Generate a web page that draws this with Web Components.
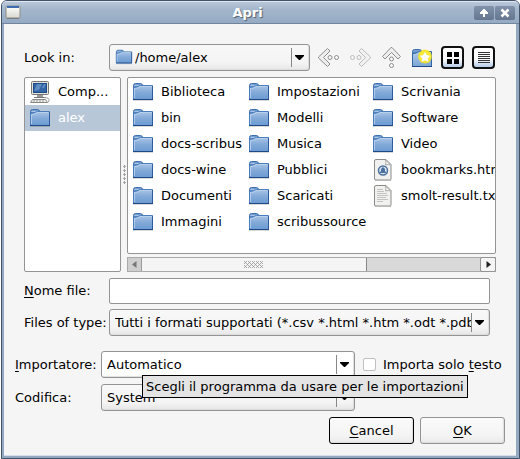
<!DOCTYPE html>
<html lang="it">
<head>
<meta charset="utf-8">
<title>Apri</title>
<style>
html, body { height: 100%; margin: 0; }
body { background: #fff; font: 13px/16px "DejaVu Sans", sans-serif; color: #000; overflow: hidden; }
</style>
</head>
<body>
<file-dialog></file-dialog>
<script>
const ICONS = {
  folder: `<svg width="22" height="20" viewBox="0 0 22 20"><defs><linearGradient id="f" x1="0" y1="0" x2="0" y2="1"><stop offset="0" stop-color="#a9c5e6"/><stop offset=".5" stop-color="#82a9d8"/><stop offset="1" stop-color="#6c9bd1"/></linearGradient></defs><path d="M1 18.5h20" stroke="#000" stroke-opacity=".15"/><path d="M1.500 17V3.500q0-2 2-2h5q1.500 0 2 1.500v2h-9" fill="#729fcf" stroke="#3f6fae"/><path d="M2.500 3.500h7" stroke="#a9c5e6"/><path d="M1.500 5.500q3 0 4.500-1 1-1 2.500-1h12v14h-19z" fill="url(#f)" stroke="#4a7dbb"/><path d="M1 17.500h20" stroke="#204a87"/><path d="M20.500 4v13" stroke="#2f5c9c"/><path d="M2.500 16V6.500q3 0 4.500-1 1-1 2-1h10.500" fill="none" stroke="#bdd3ee" stroke-opacity=".8"/></svg>`,
  computer: `<svg width="22" height="24" viewBox="0 0 22 24"><rect x="2.500" y="1.500" width="17" height="13" rx="1" fill="#e4e4df" stroke="#77776f"/><rect x="4.500" y="3.500" width="13" height="9" fill="#3465a4" stroke="#204a87"/><path d="M5 11l3-7h5l-3 6zM13 8l2-4h2l-2 4z" fill="#729fcf" opacity=".7"/><path d="M8 15h6v3H8z" fill="#999"/><path d="M5 17.500h12" stroke="#777"/><path d="M3.500 19.500h13l2 3h-17z" fill="#eee" stroke="#888880"/><path d="M4 21h12" stroke="#999" stroke-dasharray="2 1"/><path d="M15 17.500q5 0 5 2t-1 3" fill="none" stroke="#999"/></svg>`,
  html: `<svg width="20" height="22" viewBox="0 0 20 22"><path d="M1.500 2q0-1.500 1.500-1.500h10l5 5V20q0 1-1.500 1H3q-1.500 0-1.500-1z" fill="#f1f1ef" stroke="#8b8d88"/><path d="M12.500 1q1 3 0 5 3-1 5 0z" fill="#fff" stroke="#aaa"/><circle cx="10" cy="11.500" r="4.500" fill="#dce6f2" stroke="#4b6f9f" stroke-width="1.500"/><path d="M10 8l2 2v2l1.500 2h-7L8 12v-2z" fill="#4b6f9f"/><path d="M2 21.500h16" stroke="#bbb"/></svg>`,
  text: `<svg width="20" height="22" viewBox="0 0 20 22"><path d="M1.500 2q0-1.500 1.500-1.500h10l5 5V20q0 1-1.500 1H3q-1.500 0-1.500-1z" fill="#f1f1ef" stroke="#8b8d88"/><path d="M12.500 1q1 3 0 5 3-1 5 0z" fill="#fff" stroke="#aaa"/><path d="M4 4.500h6M4 6.500h7M4 8.500h10M4 10.500h11M4 12.500h9M4 14.500h11M4 16.500h6" stroke="#c3c3c1"/><path d="M2 21.500h16" stroke="#bbb"/></svg>`,
  back: `<svg width="22" height="20" viewBox="0 0 22 20"><path d="M9.500 .5l2.500 2.500L5.500 9.500l6.500 6.500-2.500 2.500L.5 10V9z" fill="#eee" stroke="#8c8c8c"/><circle cx="12" cy="9.500" r="2" fill="#f8f8f8" stroke="#8c8c8c"/><circle cx="18.500" cy="9.500" r="2" fill="#f8f8f8" stroke="#8c8c8c"/></svg>`,
  win: `<svg width="16" height="15" viewBox="0 0 16 15"><defs><linearGradient id="w" x1="0" y1="0" x2="0" y2="1"><stop offset="0" stop-color="#fff"/><stop offset="1" stop-color="#d8d8d0"/></linearGradient></defs><rect x="1" y="1" width="14" height="12" rx="1" fill="url(#w)" stroke="#8d8d86"/><path d="M2 2h12" stroke="#3f6cb0" stroke-width="2"/><path d="M2 13.500h12" stroke="#667" stroke-opacity=".6"/></svg>`,
  newfolder: `<svg width="22" height="20" viewBox="0 0 22 20"><defs><radialGradient id="g"><stop offset=".4" stop-color="#fff24a"/><stop offset=".8" stop-color="#f3e626"/><stop offset="1" stop-color="#f3e626" stop-opacity="0"/></radialGradient><linearGradient id="n" x1="0" y1="0" x2="0" y2="1"><stop offset="0" stop-color="#b3cbe8"/><stop offset="1" stop-color="#7ba5d6"/></linearGradient></defs><path d="M1.500 18V3.500q0-2 2-2h5q1.500 0 2 1.500v2h-9" fill="#729fcf" stroke="#3f6fae"/><path d="M1.500 5.500q3 0 4.500-1 1-1 2.500-1h12v15h-19z" fill="url(#n)" stroke="#3465a4"/><path d="M1 18.500h20" stroke="#204a87"/><circle cx="14" cy="8.500" r="7.500" fill="url(#g)"/><path d="M14 3l2 3.800 4 .7-2.800 2.900.7 4.100-3.900-1.800-3.900 1.800.7-4.100L8 7.500l4-.7z" fill="#fff" stroke="#e8d80d" stroke-width=".6"/></svg>`,
  grid: `<svg width="12" height="12" viewBox="0 0 12 12"><path d="M0 0h5v5H0zM7 0h5v5H7zM0 7h5v5H0zM7 7h5v5H7z" fill="#000"/></svg>`,
  list: `<svg width="12" height="12" viewBox="0 0 12 12"><path d="M0 .5h12M0 2.500h12M0 4.500h12M0 6.500h12M0 8.500h12M0 10.500h12" stroke="#333"/></svg>`,
  min: `<svg width="10" height="10" viewBox="0 0 10 10"><path d="M4 1h2v1h1v1h1v1h1v2H6v3H4V6H1V4h1V3h1V2h1z" fill="#fff"/></svg>`,
  close: `<svg width="10" height="10" viewBox="0 0 10 10"><path d="M1.500 1.500l7 7M8.500 1.500l-7 7" stroke="#fff" stroke-width="2.500"/></svg>`,
  down: `<svg width="9" height="5" viewBox="0 0 9 5"><path d="M0 0h9v1L5 5H4L0 1z" fill="#000"/></svg>`
};
ICONS.forward = ICONS.back.replace('<svg', '<svg class="flip"');
ICONS.up = ICONS.back.replace('<svg', '<svg class="up"');
ICONS.smallfolder = ICONS.folder.replace('width="22" height="20"', 'width="18" height="16"');

function define(name, html, setup) {
  const t = document.createElement('template');
  t.innerHTML = html;
  customElements.define(name, class extends HTMLElement {
    constructor() {
      super();
      this.attachShadow({ mode: 'open' }).append(t.content.cloneNode(true));
    }
    connectedCallback() { if (setup) setup(this, this.shadowRoot); }
  });
}

define('ui-icon', `<style>
:host { display: inline-flex; flex: none; align-items: center; justify-content: center; }
svg { display: block; }
.flip { transform: scaleX(-1); opacity: .55; }
.up { transform: rotate(90deg); }
</style><span></span>`, (el, root) => { root.querySelector('span').innerHTML = ICONS[el.getAttribute('name')] || ''; });

define('title-bar', `<style>
:host { display: flex; align-items: center; gap: 1px; height: 23px; padding: 0 4px 0 3px; border-top: 1px solid #dfe6f0; border-bottom: 1px solid #71869d;
  background: linear-gradient(#b9c7da, #a3b6cb 35%, #95abc3); border-radius: 5px 5px 0 0; box-sizing: border-box; }
h1 { flex: 1; margin: 0; font: bold 13px/20px "DejaVu Sans", sans-serif; color: #fff; text-align: center; text-shadow: 1px 1px 1px #4c5f78; }
button { display: flex; align-items: center; justify-content: center; width: 20px; height: 14px; padding: 0; border: 0; border-radius: 2px; background: linear-gradient(#8192a9, #64778f); }
</style><ui-icon name="win"></ui-icon><h1><slot></slot></h1><button aria-label="Riduci"><ui-icon name="min"></ui-icon></button><button aria-label="Chiudi"><ui-icon name="close"></ui-icon></button>`);

define('combo-box', `<style>
:host { display: flex; min-width: 0; position: relative; }
select { appearance: none; flex: 1; min-width: 0; width: 100%; height: 27px; margin: 0; padding: 0 18px 0 5px; border: 1px solid #949494; border-radius: 3px;
  background: linear-gradient(#f8f8f8, #f4f4f4 70%, #e6e6e6); box-shadow: inset -1px -1px 1px #ddd; font: inherit; color: #000; }
:host([icon]) select { padding-left: 25px; }
:host([light]) select { background: #fff; }
.lead { position: absolute; left: 6px; top: 5px; }
.arrow { position: absolute; right: 0; top: 4px; bottom: 4px; width: 19px; box-sizing: border-box; padding-right: 4px; border-left: 1px solid #888; display: flex; align-items: center; justify-content: center; pointer-events: none; }
</style><select></select><span class="arrow"><ui-icon name="down"></ui-icon></span>`, (el, root) => {
  const s = root.querySelector('select');
  s.setAttribute('aria-label', el.getAttribute('label'));
  s.add(new Option(el.getAttribute('value')));
  if (el.hasAttribute('icon')) {
    const i = document.createElement('ui-icon');
    i.className = 'lead';
    i.setAttribute('name', el.getAttribute('icon'));
    root.append(i);
  }
});

define('file-item', `<style>
:host { display: flex; align-items: center; height: 26px; gap: 6px; padding-left: 3px; white-space: nowrap; }
:host([selected]) { background: #b8c7d8; color: #fff; }
ui-icon { width: 24px; }
</style><ui-icon></ui-icon><span><slot></slot></span>`, (el, root) => {
  root.querySelector('ui-icon').setAttribute('name', el.getAttribute('icon') || 'folder');
  root.querySelector('ui-icon').connectedCallback();
});

define('scroll-bar', `<style>
:host { display: flex; height: 15px; box-sizing: border-box; border: 1px solid #aaa; background: #d9d9d9; }
button { display: flex; align-items: center; justify-content: center; width: 14px; padding: 0; border: 0; flex: none; }
.l { background: #cfcfcf; border-right: 1px solid #999; }
.r { background: #f5f5f5; outline: 1px solid #949494; border-radius: 1px; }
.track { flex: 1; display: flex; }
.thumb { width: 66%; background: #f5f5f5; border-right: 1px solid #888; display: flex; align-items: center; justify-content: center; }
svg { display: block; }
</style><button class="l" aria-label="Scorri a sinistra"><svg width="5" height="7"><path d="M4.500 0v7L0 3.500z" fill="#777"/></svg></button>
<div class="track"><div class="thumb"><svg width="19" height="7"><path d="M0 .5h19M0 2.500h19M0 4.500h19M0 6.500h19" stroke="#aaa" stroke-dasharray="1 1 1 1"/><path d="M1 1.500h18M3 3.500h16M1 5.500h18" stroke="#999" stroke-dasharray="1 3"/></svg></div></div>
<button class="r" aria-label="Scorri a destra"><svg width="5" height="7"><path d="M.5 0v7L5 3.500z" fill="#222"/></svg></button>`);

define('push-button', `<style>
:host { display: flex; }
button { flex: 1; height: 27px; border: 1px solid #949494; border-radius: 3px; padding: 0; font: inherit; color: #000; background: linear-gradient(#fafafa, #f4f4f4 70%, #eaeaea); box-shadow: inset -1px -1px 1px #ddd; }
:host([default]) button { border-color: #000; }
</style><button><slot></slot></button>`);

define('tool-button', `<style>
:host { display: flex; }
button { display: flex; align-items: center; justify-content: center; width: 23px; height: 23px; padding: 0; border: 0; background: none; }
:host([framed]) button { border: 2px solid #111; border-radius: 4px; background: linear-gradient(#fff, #fafbfd 60%, #b4cbe8); }
</style><button><ui-icon></ui-icon></button>`, (el, root) => {
  root.querySelector('button').setAttribute('aria-label', el.getAttribute('label'));
  root.querySelector('ui-icon').setAttribute('name', el.getAttribute('icon'));
  root.querySelector('ui-icon').connectedCallback();
});

define('tool-tip', `<style>
:host { display: block; box-sizing: border-box; height: 23px; padding: 1px 3px; border: 1px solid #000; background: #e4e4e4; line-height: 19px; white-space: nowrap; }
</style><slot></slot>`);

define('file-dialog', `<style>
:host { display: flex; flex-direction: column; box-sizing: border-box; min-height: 100vh; margin-left: 1px; border: 1px solid #43536a; border-radius: 6px 6px 0 0; background: #93a9c1; }
main { flex: 1; display: flex; flex-direction: column; margin: 0 3px 2px 2px; border-bottom: 1px solid #d5dfea; background: #f5f5f5; }
.top { display: grid; grid-template-columns: 85px minmax(0, 1fr); padding: 20px 21px 0 20px; align-items: center; }
.bar { display: flex; }
.bar combo-box { flex: 1; }
.tools { display: flex; align-items: center; gap: 8px; margin-left: 7px; }
.panes { display: grid; grid-template-columns: 97px 6px minmax(0, 1fr); height: 195px; padding: 6px 20px 0; }
.side, .files { border: 1px solid #949494; background: #fff; box-sizing: border-box; overflow: hidden; border-radius: 2px; padding-top: 1px; }
.handle { display: flex; align-items: center; justify-content: center; }
.right { display: grid; grid-template-rows: minmax(0, 1fr) 15px; gap: 3px; }
.files { display: grid; grid-template-columns: 116px 124px minmax(0, 1fr); grid-template-rows: repeat(6, 26px); grid-auto-flow: column; }
.fields { display: grid; grid-template-columns: 85px minmax(0, 1fr); gap: 5px 0; padding: 6px 26px 0 20px; align-items: center; }
input[type=text] { box-sizing: border-box; width: 100%; height: 26px; padding: 0 5px; border: 1px solid #949494; border-radius: 2px; background: #fff; font: inherit; }
.options { display: grid; grid-template-columns: 86px 254px minmax(0, 1fr); gap: 6px 0; padding: 15px 10px 0 11px; align-items: center; position: relative; }
.check { display: flex; align-items: center; gap: 7px; padding-left: 8px; white-space: nowrap; }
input[type=checkbox] { appearance: none; width: 13px; height: 13px; margin: 0; border: 1px solid #c0c0c0; border-radius: 2px; background: #fff; }
tool-tip { position: absolute; left: 138px; top: 39px; }
.actions { display: flex; justify-content: flex-end; gap: 6px; padding: 6px 11px 11px; }
.actions push-button { width: 85px; }
label { white-space: nowrap; }
u { text-underline-offset: 2px; }
</style>
<title-bar>Apri</title-bar>
<main>
  <div class="top"><label>Look in:</label>
    <div class="bar"><combo-box label="Look in" value="/home/alex" icon="smallfolder"></combo-box>
      <div class="tools"><tool-button icon="back" label="Back"></tool-button><tool-button icon="forward" label="Forward"></tool-button><tool-button icon="up" label="Parent Directory"></tool-button><tool-button icon="newfolder" label="Create New Folder"></tool-button><tool-button icon="grid" framed label="List View"></tool-button><tool-button icon="list" framed label="Detail View"></tool-button></div>
    </div>
  </div>
  <div class="panes">
    <div class="side"><file-item icon="computer">Comp...</file-item><file-item selected>alex</file-item></div>
    <div class="handle"><svg width="3" height="19"><path d="M1.500 0v19" stroke="#999" stroke-dasharray="3 1"/><path d="M1.500 1v18" stroke="#aaa" stroke-width="3" stroke-dasharray="1 3"/></svg></div>
    <div class="right">
      <div class="files">
        <file-item>Biblioteca</file-item><file-item>bin</file-item><file-item>docs-scribus</file-item><file-item>docs-wine</file-item><file-item>Documenti</file-item><file-item>Immagini</file-item>
        <file-item>Impostazioni</file-item><file-item>Modelli</file-item><file-item>Musica</file-item><file-item>Pubblici</file-item><file-item>Scaricati</file-item><file-item>scribussource</file-item>
        <file-item>Scrivania</file-item><file-item>Software</file-item><file-item>Video</file-item><file-item icon="html">bookmarks.html</file-item><file-item icon="text">smolt-result.txt</file-item>
      </div>
      <scroll-bar></scroll-bar>
    </div>
  </div>
  <div class="fields">
    <label for="name"><u>N</u>ome file:</label><input id="name" type="text">
    <label>Files of type:</label><combo-box label="Files of type" value="Tutti i formati supportati (*.csv *.html *.htm *.odt *.pdb"></combo-box>
  </div>
  <div class="options">
    <label><u>I</u>mportatore:</label><combo-box light label="Importatore" value="Automatico"></combo-box>
    <span class="check"><input id="only" type="checkbox"><label for="only">Importa solo <u>t</u>esto</label></span>
    <label>Codifica:</label><combo-box label="Codifica" value="System"></combo-box>
    <tool-tip>Scegli il programma da usare per le importazioni</tool-tip>
  </div>
  <div class="actions"><push-button default><u>C</u>ancel</push-button><push-button><u>O</u>K</push-button></div>
</main>`);

// Clicking a label moves the focus to the drop-down beside it.
for (const label of document.querySelector('file-dialog').shadowRoot.querySelectorAll('label:not([for])')) {
  const combo = label.parentElement.matches('.top') ? label.parentElement.querySelector('combo-box') : label.nextElementSibling;
  label.addEventListener('click', () => combo.shadowRoot.querySelector('select').focus());
}
</script>
</body>
</html>
